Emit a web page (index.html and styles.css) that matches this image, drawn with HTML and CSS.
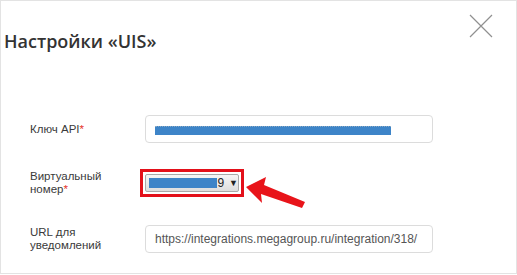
FILE: index.html
```html
<!DOCTYPE html>
<html lang="ru">
<head>
    <meta charset="UTF-8">
    <title>Настройки «UIS»</title>
    <link rel="stylesheet" href="styles.css">
</head>
<body>
    <div class="modal">
        <div class="modal-head">
            <h2 class="modal-title">Настройки «UIS»</h2>
            <button class="close-btn" type="button">
                <svg width="24" height="24" viewBox="0 0 24 24">
                    <path d="M1 1 L23 23 M23 1 L1 23" stroke="#909090" stroke-width="1.2" fill="none"/>
                </svg>
            </button>
        </div>

        <div class="form">
            <div class="form-row row-api">
                <label class="form-label">Ключ API<span class="req">*</span></label>
                <div class="field">
                    <span class="hidden-value api-value"></span>
                </div>
            </div>

            <div class="form-row row-number">
                <label class="form-label">Виртуальный<br>номер<span class="req">*</span></label>
                <div class="select-wrap">
                    <div class="fake-select">
                        <span class="hidden-value num-value"></span><span class="num-end">9</span>
                        <span class="caret">▼</span>
                    </div>
                </div>
            </div>

            <div class="form-row row-url">
                <label class="form-label">URL для<br>уведомлений</label>
                <div class="field">
                    <span class="field-text">https://integrations.megagroup.ru/integration/318/</span>
                </div>
            </div>

            <!-- стрелка-подсказка -->
            <svg class="hint-arrow" width="62" height="34" viewBox="0 0 62 34">
                <path d="M1 10 L21 0 L19 8 L60 25 L57 31 L16 17 L17 26 Z" fill="#e8141a"/>
            </svg>
        </div>
    </div>
</body>
</html>
```

FILE: styles.css
```css
body {
    margin: 0;
    padding: 0;
    background: #fff;
    font-family: "Liberation Sans", Arial, sans-serif;
}

.modal {
    width: 517px;
    height: 274px;
    box-sizing: border-box;
    border: 1px solid #e3e3e3;
    background: #fff;
    overflow: hidden;
}

.modal-head {
    display: flex;
    justify-content: space-between;
    align-items: flex-start;
}

.modal-title {
    margin: 25px 0 0 3px;
    font-family: "Open Sans", sans-serif;
    font-weight: 600;
    font-size: 18px;
    line-height: 30px;
    color: #333;
}

.close-btn {
    margin: 13px 23px 0 0;
    padding: 0;
    border: 0;
    background: none;
    width: 24px;
    height: 24px;
}

.close-btn svg {
    display: block;
}

.form {
    position: relative;
    margin-top: 59px;
    padding-left: 29px;
}

.form-row {
    display: flex;
    align-items: center;
}

.row-number {
    margin-top: 26px;
}

.row-url {
    margin-top: 28px;
}

.form-label {
    width: 115px;
    font-size: 11.5px;
    line-height: 13px;
    color: #3a3a3a;
}

.req {
    color: #e5332a;
}

.field {
    width: 288px;
    height: 28px;
    box-sizing: border-box;
    border: 1px solid #dcdcdc;
    border-radius: 4px;
    display: flex;
    align-items: center;
    padding-left: 9px;
}

.field-text {
    font-size: 12px;
    color: #555;
}

.hidden-value {
    display: inline-block;
    background: #3d84c8;
}

.api-value {
    width: 236px;
    height: 8px;
    margin-top: 2px;
    border-top: 1px dotted #8aa9c4;
}

.select-wrap {
    margin-left: -5px;
    padding: 2px;
    border: 3px solid #e3101a;
}

.fake-select {
    width: 94px;
    height: 18px;
    box-sizing: border-box;
    border: 1px solid #a9a9a9;
    border-radius: 2px;
    background: linear-gradient(#f6f6f6, #dedede);
    display: flex;
    align-items: center;
    padding-left: 3px;
    font-size: 12px;
    color: #222;
}

.num-value {
    width: 72px;
    height: 10px;
}

.caret {
    margin-left: 5px;
    font-size: 9px;
}

.hint-arrow {
    position: absolute;
    left: 244px;
    top: 62px;
}
```
